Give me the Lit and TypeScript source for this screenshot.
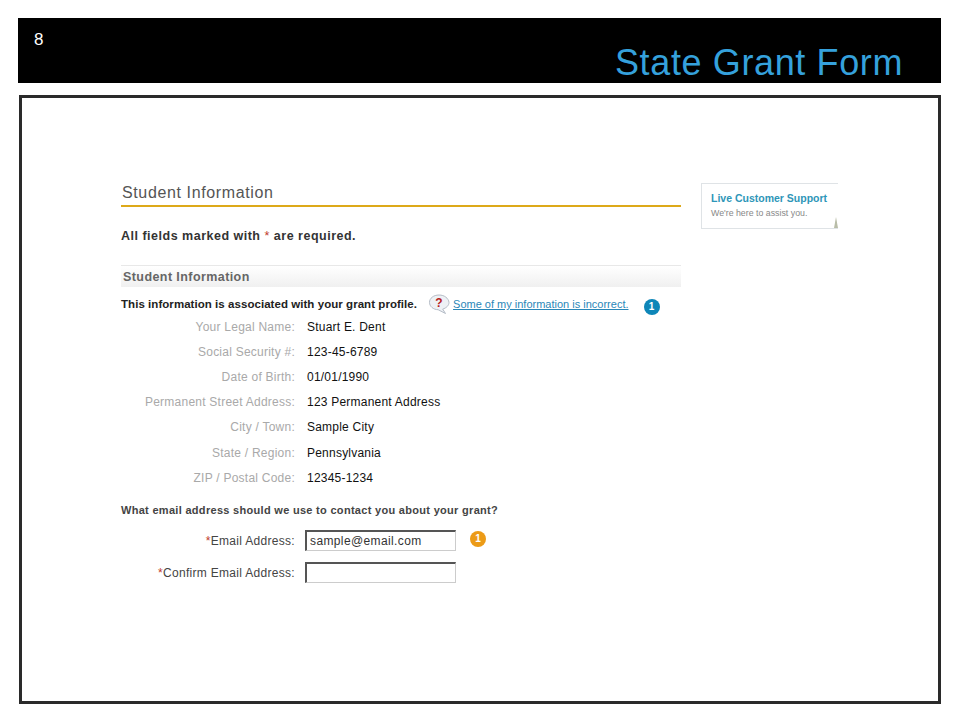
import { LitElement, html, css, svg } from "lit";
import { customElement } from "lit/decorators.js";

const ROWS: [string, string][] = [
  ["Your Legal Name:", "Stuart E. Dent"],
  ["Social Security #:", "123-45-6789"],
  ["Date of Birth:", "01/01/1990"],
  ["Permanent Street Address:", "123 Permanent Address"],
  ["City / Town:", "Sample City"],
  ["State / Region:", "Pennsylvania"],
  ["ZIP / Postal Code:", "12345-1234"],
];

const helpIcon = svg`<svg class="help" width="22" height="20" viewBox="0 0 22 20">
  <path d="M11 1C5.6 1 1.500 4.200 1.500 8.400c0 4 3.800 7.200 8.600 7.300l7.400 3.800-2.800-4.400c3.700-1.100 6.300-3.700 6.300-6.700C20.500 4.200 16.400 1 11 1z" fill="#eef1f5" stroke="#b4bcc6" stroke-width="1"/>
  <text x="11" y="13" text-anchor="middle" font-family="Liberation Sans" font-weight="700" font-size="12" fill="#b5201c">?</text>
</svg>`;

@customElement("app-root")
export class AppRoot extends LitElement {
  static styles = css`
    :host { display: block; width: 960px; height: 720px; background: #fff; overflow: hidden; font-family: "Liberation Sans", Arial, sans-serif; }
    .page { display: flex; flex-direction: column; padding: 18px 19px 0 18px; }
    .bar { height: 65px; background: #000; position: relative; display: flex; justify-content: flex-end; align-items: flex-end; padding-right: 38px; box-sizing: border-box; }
    .num { position: absolute; left: 16px; top: 13px; color: #fff; font-size: 17px; line-height: 18px; }
    .title { color: #35a1dc; font-size: 36px; line-height: 42px; margin-bottom: 0; letter-spacing: 0.62px; position: relative; top: 1px; }
    .frame { margin: 12px 0 0 1px; height: 609px; box-sizing: border-box; border: 3px solid #2a2a2a; display: flex; padding: 85px 0 0 99px; gap: 20px; background: #fff; }
    .main { width: 560px; display: flex; flex-direction: column; }
    .h { color: #555; font-size: 16px; line-height: 20px; height: 22px; padding-left: 1px; border-bottom: 2px solid #dda919; letter-spacing: 0.62px; }
    .req { font-weight: 700; font-size: 12.500px; line-height: 16px; color: #333; margin-top: 21px; letter-spacing: 0.5px; }
    .req span { color: #c0392b; font-weight: 400; }
    .band { margin-top: 21px; height: 22px; box-sizing: border-box; border-top: 1px solid #e8e8e8; background: linear-gradient(#fff, #f0f0f0); font-weight: 700; font-size: 12.500px; line-height: 22px; color: #666; padding-left: 2px; letter-spacing: 0.42px; }
    .intro { display: flex; align-items: center; height: 20px; margin-top: 7px; }
    .intro b { font-size: 11.500px; color: #222; letter-spacing: 0.05px; }
    .help { margin-left: 11px; flex: none; }
    .link { margin-left: 3px; font-size: 11px; color: #2a87b8; text-decoration: underline; }
    .badge { flex: none; border-radius: 50%; width: 16px; height: 16px; color: #fff; font-weight: 700; font-size: 10px; line-height: 16px; text-align: center; }
    .badge.blue { background: #0e86b8; margin: 5px 0 0 15px; }
    .badge.orange { background: #ec9b17; margin: 0 0 4px 14px; }
    .rows { display: flex; flex-direction: column; }
    .row { display: flex; height: 25.200px; align-items: center; font-size: 12px; }
    .lab { width: 174px; flex: none; text-align: right; color: #a9a9a9; letter-spacing: 0.24px; white-space: nowrap; }
    .val { margin-left: 12px; color: #111; letter-spacing: 0.22px; }
    .q { font-weight: 700; font-size: 11px; color: #444; margin-top: 12px; line-height: 16px; letter-spacing: 0.3px; }
    .field { display: flex; align-items: center; height: 21px; font-size: 12px; color: #444; }
    .field .lab { color: #444; letter-spacing: 0.3px; }
    .field i { color: #c0392b; font-style: normal; }
    .first { margin-top: 12px; }
    .second { margin-top: 11px; }
    .input { margin-left: 10px; width: 151px; height: 21px; box-sizing: border-box; border: 1px solid #ccc; border-top: 2px solid #555; border-left: 2px solid #555; font-size: 12px; line-height: 18px; padding-left: 3px; color: #333; letter-spacing: 0.38px; }
    .side { width: 137px; height: 46px; box-sizing: border-box; border: 1px solid #dfe3e6; border-right: none; padding: 7px 0 0 9px; position: relative; }
    .side b { display: block; font-size: 10.500px; line-height: 14px; color: #2e96b8; }
    .side span { display: block; font-size: 8.800px; line-height: 12px; color: #888; margin-top: 2px; }
    .tri { position: absolute; right: 0; bottom: 0; width: 0; height: 0; border-left: 2.500px solid transparent; border-right: 2.500px solid transparent; border-bottom: 11px solid #b9bda8; }
  `;

  render() {
    return html`<div class="page">
      <div class="bar"><div class="num">8</div><div class="title">State Grant Form</div></div>
      <div class="frame">
        <div class="main">
          <div class="h">Student Information</div>
          <div class="req">All fields marked with <span>*</span> are required.</div>
          <div class="band">Student Information</div>
          <div class="intro">
            <b>This information is associated with your grant profile.</b>
            ${helpIcon}
            <span class="link">Some of my information is incorrect.</span>
            <span class="badge blue">1</span>
          </div>
          <div class="rows">
            ${ROWS.map(([l, v]) => html`<div class="row"><div class="lab">${l}</div><div class="val">${v}</div></div>`)}
          </div>
          <div class="q">What email address should we use to contact you about your grant?</div>
          <div class="field first">
            <div class="lab"><i>*</i>Email Address:</div>
            <div class="input">sample@email.com</div>
            <span class="badge orange">1</span>
          </div>
          <div class="field second">
            <div class="lab"><i>*</i>Confirm Email Address:</div>
            <div class="input"></div>
          </div>
        </div>
        <div class="side">
          <b>Live Customer Support</b>
          <span>We're here to assist you.</span>
          <div class="tri"></div>
        </div>
      </div>
    </div>`;
  }
}
